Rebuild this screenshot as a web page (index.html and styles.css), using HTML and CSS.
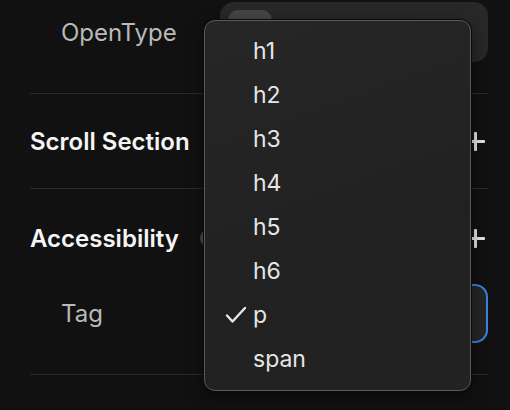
FILE: index.html
```html
<!DOCTYPE html>
<html>
<head>
<meta charset="utf-8">
<link rel="stylesheet" href="styles.css">
</head>
<body>
<div class="panel">
  <div class="row row-open">
    <span class="label">OpenType</span>
    <div class="control"><div class="control-tab"></div></div>
  </div>
  <div class="divider"></div>
  <div class="section section-scroll">
    <div class="head">
      <span class="title">Scroll Section</span>
      <span class="plus"></span>
    </div>
  </div>
  <div class="divider"></div>
  <div class="section section-access">
    <div class="head">
      <span class="title">Accessibility</span>
      <span class="info"></span>
      <span class="plus"></span>
    </div>
    <div class="row row-tag">
      <span class="label">Tag</span>
      <div class="select"></div>
    </div>
  </div>
  <div class="divider"></div>
</div>

<div class="menu">
  <div class="item">h1</div>
  <div class="item">h2</div>
  <div class="item">h3</div>
  <div class="item">h4</div>
  <div class="item">h5</div>
  <div class="item">h6</div>
  <div class="item checked">
    <svg class="check" width="22" height="18" viewBox="0 0 22 18"><path d="M2 9.5 L7.5 15.5 L20 2" fill="none" stroke="#e8e8e8" stroke-width="2.4" stroke-linecap="round" stroke-linejoin="round"/></svg>
    p
  </div>
  <div class="item">span</div>
</div>
</body>
</html>
```

FILE: styles.css
```css
html, body {
  margin: 0;
  padding: 0;
  background: #111111;
  width: 510px;
  height: 410px;
  overflow: hidden;
  font-family: Inter, "Noto Sans", sans-serif;
}

.panel {
  margin-left: 30px;
  width: 458px;
  display: flex;
  flex-direction: column;
}

.divider {
  height: 1px;
  background: #2a2a2a;
}

.row {
  display: flex;
  align-items: center;
}

.row-open {
  margin-top: 2px;
  height: 60px;
  margin-bottom: 31px;
}

.label {
  padding-left: 31px;
  font-size: 24px;
  color: #b9b9b9;
  flex: 1;
}

.control {
  width: 268px;
  height: 60px;
  border-radius: 14px;
  background: #282828;
  box-sizing: border-box;
  padding: 8px 0 0 8px;
}

.control-tab {
  width: 44px;
  height: 30px;
  border-radius: 10px;
  background: #454545;
}

.section {
  display: flex;
  flex-direction: column;
}

.section-scroll {
  padding: 31px 0 31px;
}

.section-access {
  padding: 33px 0 31px;
  gap: 30px;
}

.head {
  height: 32px;
  display: flex;
  align-items: center;
}

.title {
  font-size: 24px;
  font-weight: 600;
  color: #f5f5f5;
}

.info {
  margin-left: 21px;
  width: 20px;
  height: 20px;
  border-radius: 50%;
  background: #4a4a4a;
}

.plus {
  margin-left: auto;
  margin-right: 3px;
  width: 19px;
  height: 19px;
  position: relative;
}

.plus::before,
.plus::after {
  content: "";
  position: absolute;
  background: #e6e6e6;
  border-radius: 1px;
}

.plus::before {
  left: 8px;
  top: 0;
  width: 3px;
  height: 19px;
}

.plus::after {
  left: 0;
  top: 8px;
  width: 19px;
  height: 3px;
}

.row-tag {
  height: 59px;
}

.select {
  width: 268px;
  height: 59px;
  box-sizing: border-box;
  border: 2px solid #3b82e0;
  border-radius: 13px;
  background: #262626;
}

.menu {
  position: absolute;
  left: 204px;
  top: 20px;
  width: 267px;
  height: 371px;
  box-sizing: border-box;
  border: 1px solid #595959;
  border-radius: 11px;
  background: linear-gradient(160deg, #262626 0%, #212121 60%, #222222 100%);
  box-shadow: 0 0 0 1px #0a0a0a, 0 6px 18px rgba(0,0,0,0.5);
  padding: 8px 0 9px;
  display: flex;
  flex-direction: column;
}

.item {
  height: 44px;
  line-height: 44px;
  padding-left: 48px;
  font-size: 23px;
  color: #e6e6e6;
  position: relative;
}

.check {
  position: absolute;
  left: 20px;
  top: 13px;
}
```
